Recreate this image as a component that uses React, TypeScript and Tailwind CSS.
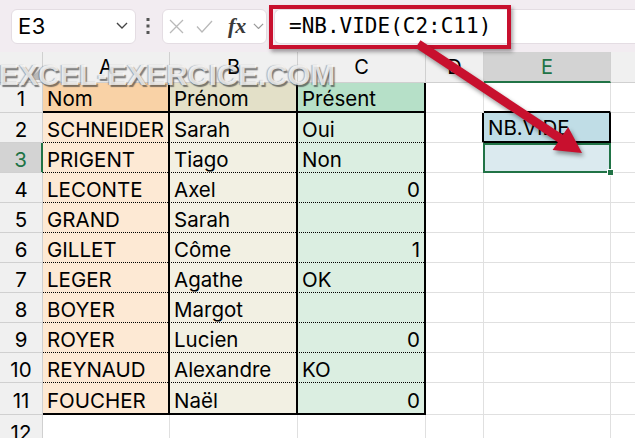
type Row = { n: number; a: string; b: string; c: string; num?: boolean }

const rows: Row[] = [
  { n: 1, a: "Nom", b: "Prénom", c: "Présent" },
  { n: 2, a: "SCHNEIDER", b: "Sarah", c: "Oui" },
  { n: 3, a: "PRIGENT", b: "Tiago", c: "Non" },
  { n: 4, a: "LECONTE", b: "Axel", c: "0", num: true },
  { n: 5, a: "GRAND", b: "Sarah", c: "" },
  { n: 6, a: "GILLET", b: "Côme", c: "1", num: true },
  { n: 7, a: "LEGER", b: "Agathe", c: "OK" },
  { n: 8, a: "BOYER", b: "Margot", c: "" },
  { n: 9, a: "ROYER", b: "Lucien", c: "0", num: true },
  { n: 10, a: "REYNAUD", b: "Alexandre", c: "KO" },
  { n: 11, a: "FOUCHER", b: "Naël", c: "0", num: true },
]

function Chevron({ size, color }: { size: number; color: string }) {
  return (
    <svg width={size} height={size * 0.6} viewBox="0 0 10 6">
      <polyline points="0.8,0.8 5,5 9.2,0.8" fill="none" stroke={color} strokeWidth="1.1" />
    </svg>
  )
}

function TopBar() {
  return (
    <div className="relative h-[52px] bg-[#f2ecf1] flex items-center pl-[11px]">
      <div className="w-[125px] h-[35px] bg-white rounded-md border border-[#e4dde3] flex items-center justify-between pl-[6px] pr-[7px]">
        <span className="text-[22px] leading-none tracking-[0.5px]">E3</span>
        <Chevron size={12} color="#444" />
      </div>
      <svg className="ml-[10px] mr-[12px]" width="4" height="16" viewBox="0 0 4 16">
        <rect x="0.5" y="0" width="3" height="3" fill="#555" />
        <rect x="0.5" y="6.5" width="3" height="3" fill="#555" />
        <rect x="0.5" y="13" width="3" height="3" fill="#555" />
      </svg>
      <div className="w-[105px] h-[35px] bg-white rounded-md border border-[#e4dde3] flex items-center pl-[6px]">
        <svg width="15" height="15" viewBox="0 0 15 15">
          <path d="M1 1 L14 14 M14 1 L1 14" stroke="#b9b9b9" strokeWidth="1.3" fill="none" />
        </svg>
        <svg className="ml-[12px]" width="17" height="13" viewBox="0 0 17 13">
          <polyline points="1,6.5 6,12 16,1" stroke="#b9b9b9" strokeWidth="1.3" fill="none" />
        </svg>
        <span className="ml-[15px] font-['Liberation_Serif',serif] italic font-bold text-[22px] leading-none text-[#3a3a3a]">fx</span>
        <span className="ml-[7px]">
          <Chevron size={11} color="#9a9a9a" />
        </span>
      </div>
      <div className="ml-[7px] flex-1 h-[35px] bg-white rounded-l-md border border-r-0 border-[#e4dde3] flex items-center pl-[14px]">
        <span className="font-['DejaVu_Sans_Mono',monospace] text-[21px] leading-none">=NB.VIDE(C2:C11)</span>
      </div>
      <div className="absolute left-[269px] top-[5px] w-[242px] h-[44px] border-4 border-[#c8102e] shadow-[2px_3px_4px_rgba(0,0,0,0.35)]" />
    </div>
  )
}

function HeaderRow() {
  return (
    <div className="flex h-[31px] bg-[#f0f0f0] text-[20px] leading-[24px]">
      <div className="relative w-[43px] border-r border-b border-[#d0d0d0]">
        <svg className="absolute right-[2px] bottom-[2px]" width="11" height="11" viewBox="0 0 11 11">
          <polygon points="11,0 11,11 0,11" fill="#b9b9b9" />
        </svg>
      </div>
      <div className="w-[127px] flex items-center justify-center border-r border-b border-[#d0d0d0]">A</div>
      <div className="w-[128px] flex items-center justify-center border-r border-b border-[#d0d0d0]">B</div>
      <div className="w-[128px] flex items-center justify-center border-r border-b border-[#d0d0d0]">C</div>
      <div className="w-[58px] flex items-center justify-center border-r border-b border-[#d0d0d0]">D</div>
      <div className="w-[127px] flex items-center justify-center border-r border-[#d0d0d0] bg-[#d3d3d3] text-[#217346] border-b-2 border-b-[#217346]">E</div>
      <div className="flex-1 border-b border-[#d0d0d0]" />
    </div>
  )
}

function TableCell({ n, w, bg, text, right }: { n: number; w: string; bg: string; text: string; right?: boolean }) {
  const pt = n === 1 ? "pt-[1px]" : "pt-[3px]"
  return (
    <div className={`${w} shrink-0 flex items-center px-[4px] whitespace-nowrap [border-right:2px_solid_#000] ${pt} ${bg} ${right ? "justify-end" : ""}`}>
      {text}
    </div>
  )
}

function DataRow({ r }: { r: Row }) {
  const first = r.n === 1
  const h = r.n === 11 ? "h-[32px]" : "h-[30px]"
  const pt = first ? "pt-[1px]" : "pt-[3px]"
  return (
    <div className={`flex ${h} text-[20.5px] leading-[24px]`}>
      <div
        className={
          r.n === 3
            ? `w-[43px] flex items-center justify-center ${pt} bg-[#d3d3d3] text-[#217346] border-r-2 border-r-[#217346]`
            : `w-[43px] flex items-center justify-center ${pt} bg-[#f0f0f0] border-r border-[#d0d0d0]`
        }
      >
        {r.n}
      </div>
      <TableCell n={r.n} w="w-[127px]" bg={first ? "bg-[#f9d2a6]" : "bg-[#fde9d4]"} text={r.a} />
      <TableCell n={r.n} w="w-[128px]" bg={first ? "bg-[#e3e0c8]" : "bg-[#f2f0e3]"} text={r.b} />
      <TableCell n={r.n} w="w-[128px]" bg={first ? "bg-[#b6e0c8]" : "bg-[#dbeee1]"} text={r.c} right={r.num} />
      <div className={`w-[58px] border-b border-[#e0e0e0] ${r.n === 2 ? "border-r-2 border-r-black" : "border-r"}`} />
      {r.n === 1 && <div className="w-[127px] border-r border-[#e0e0e0] border-b-2 border-b-black" />}
      {r.n === 2 && (
        <div className="w-[127px] flex items-center pt-[2px] pl-[4px] bg-[#c0dde6] border-r-2 border-b-2 border-black">NB.VIDE</div>
      )}
      {r.n === 3 && (
        <div className="relative w-[127px] bg-[#dbeaef] border-r border-b border-[#e0e0e0]">
          <div className="absolute -left-px top-0 -right-px -bottom-px border-2 border-[#217346]" />
          <div className="absolute -right-[4px] -bottom-[4px] w-[7px] h-[7px] bg-[#217346] border border-white" />
        </div>
      )}
      {r.n > 3 && <div className="w-[127px] border-r border-b border-[#e0e0e0]" />}
      <div className="flex-1 border-b border-[#e0e0e0]" />
    </div>
  )
}

function LastRow() {
  return (
    <div className="flex h-[30px] text-[20.5px] leading-[24px]">
      <div className="w-[43px] flex items-start justify-center pt-[6px] bg-[#f0f0f0] border-r border-[#d0d0d0]">12</div>
      <div className="w-[127px] border-r border-b border-[#e0e0e0]" />
      <div className="w-[128px] border-r border-b border-[#e0e0e0]" />
      <div className="w-[128px] border-r border-b border-[#e0e0e0]" />
      <div className="w-[58px] border-r border-b border-[#e0e0e0]" />
      <div className="w-[127px] border-r border-b border-[#e0e0e0]" />
      <div className="flex-1 border-b border-[#e0e0e0]" />
    </div>
  )
}

// horizontal rules of the table and row header drawn on top
function RowRules() {
  const dotted = [2, 3, 4, 5, 6, 7, 8, 9, 10].map((k) => 83 + 30 * k - 0.5)
  const hdr = [1, 2, 3, 4, 5, 6, 7, 8, 9, 10].map((k) => 83 + 30 * k - 0.5)
  return (
    <svg className="absolute inset-0 pointer-events-none" width="635" height="438" viewBox="0 0 635 438" shapeRendering="crispEdges">
      {hdr.map((y) => (
        <line key={`h${y}`} x1="0" x2="42" y1={y} y2={y} stroke="#d0d0d0" strokeWidth="1" />
      ))}
      <line x1="0" x2="42" y1="414.5" y2="414.5" stroke="#d0d0d0" strokeWidth="1" />
      <line x1="43" x2="426" y1="112" y2="112" stroke="#000" strokeWidth="2" />
      {dotted.map((y) => (
        <line key={y} x1="43" x2="424" y1={y} y2={y} stroke="#000" strokeWidth="1" strokeDasharray="1 1" />
      ))}
      <line x1="43" x2="426" y1="414" y2="414" stroke="#000" strokeWidth="2" />
    </svg>
  )
}

export default function App() {
  return (
    <div className="relative w-[635px] h-[438px] overflow-hidden bg-white text-black font-['Inter',sans-serif]">
      <TopBar />
      <HeaderRow />
      {rows.map((r) => (
        <DataRow key={r.n} r={r} />
      ))}
      <LastRow />
      <RowRules />

      {/* watermark */}
      <div className="absolute -left-[1px] top-[60px] font-['Liberation_Sans',sans-serif] font-bold text-[29.5px] leading-none text-[rgba(255,255,255,0.78)] [text-shadow:1.5px_1.5px_1px_rgba(50,50,50,0.6),-1px_0_1px_rgba(50,50,50,0.35)] whitespace-nowrap pointer-events-none">
        EXCEL-EXERCICE.COM
      </div>

      {/* arrow */}
      <svg className="absolute inset-0 pointer-events-none" width="635" height="438" viewBox="0 0 635 438">
        <polygon
          points="420.5,40.3 562.9,134.8 568.2,126.9 582,153 552.6,150.1 557.9,142.2 415.5,47.7"
          fill="#c8102e"
          style={{ filter: "drop-shadow(2px 3px 2px rgba(0,0,0,0.4))" }}
        />
      </svg>
    </div>
  )
}
